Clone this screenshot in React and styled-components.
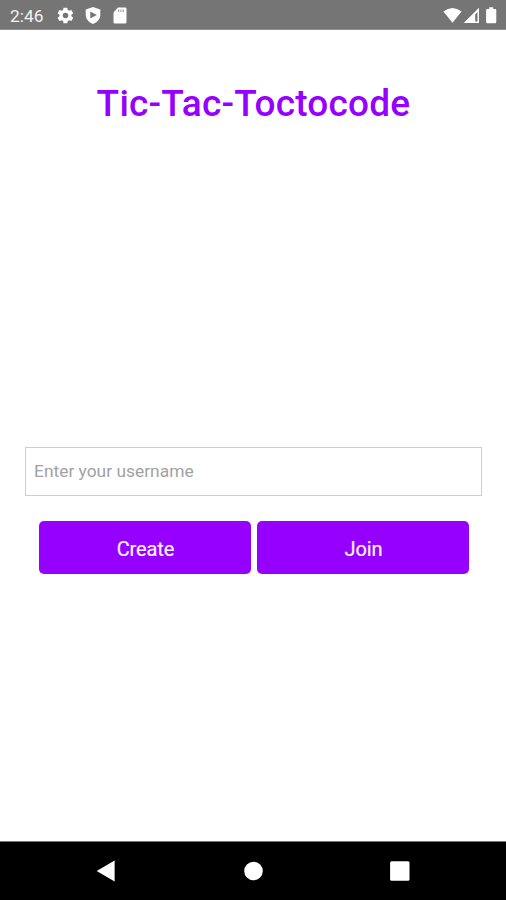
import React from "react";
import styled, { createGlobalStyle } from "styled-components";

const GlobalStyle = createGlobalStyle`
  * { box-sizing: border-box; }
  html, body { margin: 0; background: #fff; }
  body { font-family: Roboto, "Liberation Sans", sans-serif; }
`;

const Screen = styled.div`
  display: flex;
  flex-direction: column;
  width: 506px;
  height: 900px;
  background: #fff;
  overflow: hidden;
`;

const StatusBar = styled.header`
  display: flex;
  align-items: center;
  justify-content: space-between;
  flex: none;
  height: 30px;
  padding: 2px 8px 0 10px;
  background: #757575;
  border-bottom: 1px solid #929292;
  color: #fff;
`;

const StatusGroup = styled.div`
  display: flex;
  align-items: center;
`;

const NotificationGroup = styled(StatusGroup)`
  gap: 9px;
`;

const Clock = styled.time`
  width: 36px;
  margin-right: 1px;
  font-size: 17.4px;
  line-height: 20px;
  white-space: nowrap;
  color: #f2f2f2;
`;

const Glyph = styled.svg`
  display: block;
  flex: none;
  fill: #fff;
`;

const Content = styled.main`
  display: flex;
  flex-direction: column;
  flex: 1;
  padding: 0 24px 0 25px;
`;

const Title = styled.h1`
  height: 417px;
  margin: 0;
  padding-top: 52px;
  font-size: 37px;
  line-height: 44px;
  font-weight: 500;
  letter-spacing: 0.22px;
  text-align: center;
  color: #9600ff;
`;

const UsernameInput = styled.input`
  width: 457px;
  height: 49px;
  padding: 0 8px 2px;
  border: 1.5px solid #cecece;
  border-radius: 0;
  outline: 0;
  background: #fff;
  font: 400 17.4px/20px Roboto, sans-serif;
  letter-spacing: 0;
  color: #222;
  &::placeholder { color: #a2a2a2; opacity: 1; }
`;

const Actions = styled.div`
  display: flex;
  gap: 6px;
  padding: 25px 13px 0 14px;
`;

const ActionButton = styled.button`
  flex: 1;
  height: 53px;
  padding: 3px 0 0 1px;
  border: 0;
  border-radius: 5px;
  background: #9600ff;
  color: #fbf2ff;
  font: 400 20px/24px Roboto, sans-serif;
  letter-spacing: -0.1px;
  -webkit-text-stroke: 0.2px #fbf2ff;
`;

const NavBar = styled.nav`
  display: flex;
  align-items: center;
  flex: none;
  height: 59px;
  padding: 0 33px;
  border-top: 1px solid #777;
  background: #000;
`;

const NavButton = styled.button`
  display: flex;
  flex: 1;
  justify-content: center;
  padding: 0;
  border: 0;
  background: none;
`;

export default function App() {
  return (
    <>
      <GlobalStyle />
      <Screen>
        <StatusBar>
          <NotificationGroup>
            <Clock>2:46</Clock>
            <Glyph width="19" height="19" viewBox="0 0 24 24" aria-hidden="true">
              <path d="M19.4 13a7.5 7.5 0 0 0 0-2l2.1-1.6a.5.5 0 0 0 .1-.6l-2-3.5a.5.5 0 0 0-.6-.2l-2.5 1a7.3 7.3 0 0 0-1.7-1l-.4-2.6a.5.5 0 0 0-.5-.4h-4a.5.5 0 0 0-.5.4L9 5.1a7.700 7.700 0 0 0-1.700 1l-2.500-1a.5.5 0 0 0-.6.2l-2 3.500a.5.5 0 0 0 .1.6L4.500 11a7.500 7.500 0 0 0 0 2l-2.200 1.600a.5.5 0 0 0-.1.6l2 3.500c.1.2.4.3.6.2l2.500-1a7.300 7.300 0 0 0 1.700 1l.4 2.600c0 .2.2.4.5.4h4c.2 0 .5-.2.5-.4l.4-2.600a7.700 7.700 0 0 0 1.700-1l2.500 1c.2.1.5 0 .6-.2l2-3.500a.5.5 0 0 0-.1-.6zM12 15.500a3.500 3.500 0 1 1 0-7 3.500 3.500 0 0 1 0 7z" />
            </Glyph>
            <Glyph width="18" height="19" viewBox="0 0 18 19" aria-hidden="true">
              <path fillRule="evenodd" d="M9 1l7.300 2.600v5.200c0 4.200-3 7.500-7.300 9.200-4.300-1.700-7.300-5-7.300-9.200V3.600zM6.300 5.600v7L12.800 9z" />
            </Glyph>
            <Glyph width="18" height="19" viewBox="0 0 18 19" aria-hidden="true">
              <path d="M7 1.500h7.200a1.300 1.300 0 0 1 1.300 1.300v13.400a1.300 1.300 0 0 1-1.300 1.300H3.800a1.300 1.300 0 0 1-1.300-1.300V6.500z" />
              <path fill="#a8a8a8" d="M7 3.500h1.300v2.500H7zM9.300 3.500h1.300v2.500H9.300zM11.600 3.500h1.300v2.500h-1.300z" />
            </Glyph>
          </NotificationGroup>
          <StatusGroup>
            <Glyph width="20" height="18" viewBox="0 0 20 18" aria-hidden="true">
              <path d="M.4 4.600Q9.500-2.600 18.600 4.600L9.500 15.800z" />
            </Glyph>
            <Glyph width="22" height="18" viewBox="0 0 22 18" aria-hidden="true">
              <path fillRule="evenodd" d="M16 .7v15.300H.7zM14.500 5L12.200 7.400v7.100h2.300z" />
            </Glyph>
            <Glyph width="13" height="18" viewBox="0 0 13 18" aria-hidden="true">
              <path d="M4.200.3h4v1.600h1.900q1.200 0 1.200 1.200v12q0 1.200-1.200 1.200H2.300q-1.200 0-1.200-1.200v-12q0-1.200 1.200-1.200h1.900z" />
            </Glyph>
          </StatusGroup>
        </StatusBar>
        <Content>
          <Title>Tic-Tac-Toctocode</Title>
          <UsernameInput placeholder="Enter your username" aria-label="Username" />
          <Actions>
            <ActionButton>Create</ActionButton>
            <ActionButton>Join</ActionButton>
          </Actions>
        </Content>
        <NavBar>
          <NavButton aria-label="Back">
            <Glyph width="20" height="22" viewBox="0 0 20 22"><path d="M.7 11L18.600.5v21z" /></Glyph>
          </NavButton>
          <NavButton aria-label="Home">
            <Glyph width="20" height="20" viewBox="0 0 20 20"><circle cx="10.500" cy="10" r="9.300" /></Glyph>
          </NavButton>
          <NavButton aria-label="Recent apps">
            <Glyph width="20" height="20" viewBox="0 0 20 20"><rect x=".1" y=".2" width="19.400" height="19.600" rx="1.500" /></Glyph>
          </NavButton>
        </NavBar>
      </Screen>
    </>
  );
}
